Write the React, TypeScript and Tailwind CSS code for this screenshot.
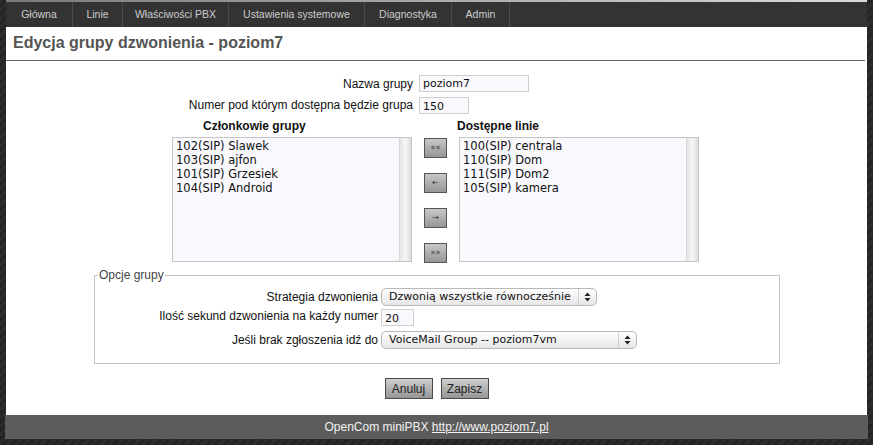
import React from "react";

const sans = "font-['Liberation_Sans',Arial,sans-serif]";
const verd = "font-['DejaVu_Sans',Verdana,sans-serif]";

function UpDown() {
  return (
    <svg width="7" height="10" viewBox="0 0 7 10">
      <path d="M3.5 0.5 L6.5 4 L0.5 4 Z" fill="#222" />
      <path d="M0.5 6 L6.5 6 L3.5 9.5 Z" fill="#222" />
    </svg>
  );
}

function FakeSelect({ text, width }: { text: string; width: string }) {
  return (
    <div
      className={`${width} h-[18px] flex items-center rounded-[5px] border border-[#b8b8b8] bg-gradient-to-b from-white to-[#e6e6e6] ${verd} text-[11px] text-[#111]`}
    >
      <span className="flex-1 pl-[7px] leading-[16px] whitespace-nowrap overflow-hidden">{text}</span>
      <span className="h-full flex items-center border-l border-[#d0d0d0] px-[5px]">
        <UpDown />
      </span>
    </div>
  );
}

function ListBox({ items }: { items: string[] }) {
  return (
    <div className="w-[240px] h-[125px] border border-[#c4c4c4] bg-[#f8f8fd] flex">
      <div className={`flex-1 pl-[3px] pt-[1px] ${verd} text-[11.5px] leading-[14px] text-[#111]`}>
        {items.map((i) => (
          <div key={i} className="whitespace-nowrap">{i}</div>
        ))}
      </div>
      <div className="w-[12px] h-full border-l border-[#d8d8d8] bg-gradient-to-r from-[#e4e4e4] via-[#f6f6f6] to-[#dcdcdc]" />
    </div>
  );
}

function ArrowBtn({ label }: { label: string }) {
  return (
    <div
      className={`w-[23px] h-[20px] border border-[#555] bg-gradient-to-b from-[#c8c8c8] to-[#969696] flex items-center justify-center ${verd} text-[8px] text-[#333]`}
    >
      {label}
    </div>
  );
}

const navItems: { label: string; w: string }[] = [
  { label: "Główna", w: "w-[67px]" },
  { label: "Linie", w: "w-[50px]" },
  { label: "Właściwości PBX", w: "w-[106px]" },
  { label: "Ustawienia systemowe", w: "w-[136px]" },
  { label: "Diagnostyka", w: "w-[87px]" },
  { label: "Admin", w: "w-[58px]" },
];

export default function App() {
  return (
    <div
      className={`w-[873px] h-[445px] overflow-hidden bg-[repeating-linear-gradient(135deg,#2c2c2c_0px,#2c2c2c_3px,#242424_3px,#242424_6px)] ${sans}`}
    >
      <div className="ml-[6px] w-[861px]">
        <div className="h-[2px] bg-gradient-to-r from-[#7a7a7a] to-[#dcdcdc]" />
        <div className="h-[25px] bg-[#333333] flex items-stretch">
          {navItems.map((n) => (
            <div
              key={n.label}
              className={`${n.w} flex items-center justify-center border-r border-[#4a4a4a] text-[10.5px] text-[#cccccc] whitespace-nowrap`}
            >
              {n.label}
            </div>
          ))}
        </div>
        <div className="h-[388px] bg-white flex flex-col">
          <div className="mr-[2px] pt-[7px] pb-[8px] border-b border-[#666] px-[7px] text-[16px] leading-[18px] font-bold text-[#555]">
            Edycja grupy dzwonienia - poziom7
          </div>

          <div className="mt-[14px] flex items-center h-[17px]">
            <div className="w-[407px] text-right text-[12px] leading-[16px] text-[#111]">Nazwa grupy</div>
            <div className={`ml-[6px] w-[110px] h-[17px] border border-[#cfcfcf] bg-[#f8f8fd] pl-[3px] ${verd} text-[11px] leading-[16px] text-[#111]`}>
              poziom7
            </div>
          </div>
          <div className="mt-[5px] flex items-center h-[17px]">
            <div className="w-[407px] text-right text-[12px] leading-[14px] text-[#111] -mt-[2px]">
              Numer pod którym dostępna będzie grupa
            </div>
            <div className={`ml-[6px] w-[50px] h-[17px] border border-[#cfcfcf] bg-[#f8f8fd] pl-[3px] pt-[1px] ${verd} text-[11px] leading-[16px] text-[#111]`}>
              150
            </div>
          </div>

          <div className="mt-[5px] pl-[197px] flex text-[12px] leading-[14px] font-bold text-[#111]">
            <div className="w-[254px]">Członkowie grupy</div>
            <div>Dostępne linie</div>
          </div>

          <div className="mt-[4px] ml-[166px] flex">
            <ListBox items={["102(SIP) Slawek", "103(SIP) ajfon", "101(SIP) Grzesiek", "104(SIP) Android"]} />
            <div className="ml-[12px] w-[23px] pt-[1px] flex flex-col gap-[15px]">
              <ArrowBtn label="««" />
              <ArrowBtn label="←" />
              <ArrowBtn label="→" />
              <ArrowBtn label="»»" />
            </div>
            <div className="ml-[12px]">
              <ListBox items={["100(SIP) centrala", "110(SIP) Dom", "111(SIP) Dom2", "105(SIP) kamera"]} />
            </div>
          </div>

          <fieldset className="mt-[5px] ml-[88px] w-[686px] border border-[#c4c4c4] pb-[14px]">
            <legend className="ml-[3px] px-[1px] text-[12px] leading-[14px] text-[#444]">Opcje grupy</legend>
            <div className="mt-[6px] flex items-center h-[18px]">
              <div className="w-[283px] text-right text-[12px] leading-[14px] text-[#111]">Strategia dzwonienia</div>
              <div className="ml-[3px]">
                <FakeSelect text="Dzwonią wszystkie równocześnie" width="w-[216px]" />
              </div>
            </div>
            <div className="mt-[3px] flex items-center h-[17px]">
              <div className="w-[283px] text-right text-[12px] leading-[14px] text-[#111] -mt-[4px]">
                Ilość sekund dzwonienia na każdy numer
              </div>
              <div className={`ml-[3px] w-[33px] h-[17px] border border-[#cfcfcf] bg-[#f8f8fd] pl-[3px] pt-[1px] ${verd} text-[11px] leading-[16px] text-[#111]`}>
                20
              </div>
            </div>
            <div className="mt-[5px] flex items-center h-[18px]">
              <div className="w-[283px] text-right text-[12px] leading-[14px] text-[#111]">Jeśli brak zgłoszenia idź do</div>
              <div className="ml-[3px]">
                <FakeSelect text="VoiceMail Group -- poziom7vm" width="w-[256px]" />
              </div>
            </div>
          </fieldset>

          <div className="mt-[14px] flex justify-center gap-[8px]">
            <div className="w-[48px] h-[21px] border border-[#4a4a4a] bg-gradient-to-b from-[#cfcfcf] to-[#969696] flex items-center justify-center text-[12px] text-[#222]">
              Anuluj
            </div>
            <div className="w-[48px] h-[21px] border border-[#4a4a4a] bg-gradient-to-b from-[#cfcfcf] to-[#969696] flex items-center justify-center text-[12px] text-[#222]">
              Zapisz
            </div>
          </div>
        </div>
        <div className="-mx-[1px] h-[24px] bg-[#5c5c5c] flex items-center justify-center text-[12px] text-[#f2f2f2]">
          <span>
            OpenCom miniPBX <span className="underline">http://www.poziom7.pl</span>
          </span>
        </div>
      </div>
    </div>
  );
}
